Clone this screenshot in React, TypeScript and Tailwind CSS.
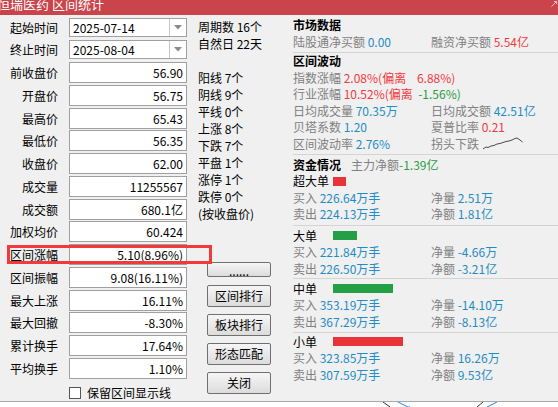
import type { ReactNode } from 'react'

const FONT = "font-['Noto_Sans_CJK_SC','Noto_Sans',sans-serif]"

const G = 'text-[#808080]'
const B = 'text-[#1f8cc4]'
const R = 'text-[#f03a40]'
const GR = 'text-[#2a9c44]'

function Combo({ label, value }: { label: string; value: string }) {
  return (
    <div className="flex h-[19px] items-center">
      <div className="w-[58px] text-right leading-[19px]">{label}</div>
      <div className="ml-[11px] flex h-[19px] w-[118px] border border-[#a0a0a0] bg-white">
        <div className="flex-1 pl-[3px] leading-[17px]">{value}</div>
        <div className="flex w-[17px] items-center justify-center border-l border-[#c8c8c8]">
          <svg width="8" height="5" viewBox="0 0 8 5">
            <path d="M0 0 H8 L4 4.5 Z" fill="#8a8a8a" />
          </svg>
        </div>
      </div>
    </div>
  )
}

function Field({ label, value, highlight }: { label: string; value: string; highlight?: boolean }) {
  return (
    <div className="relative flex h-[22.75px] items-start">
      <div className="w-[58px] text-right leading-[21px]">{label}</div>
      <div className="ml-[11px] h-[21px] w-[118px] border border-[#a0a0a0] bg-white pr-[3px] text-right leading-[19px]">
        {value}
      </div>
      {highlight ? (
        <div className="absolute left-[7px] top-[1px] h-[19px] w-[205px] border-[3px] border-[#f23a3a]" />
      ) : null}
    </div>
  )
}

function Btn({ children, className }: { children: ReactNode; className: string }) {
  return (
    <div
      className={`flex w-[64px] items-center justify-center rounded-[2px] border border-[#707070] bg-gradient-to-b from-[#f6f6f6] to-[#dcdcdc] ${className}`}
    >
      {children}
    </div>
  )
}

function Line({ left, right, className = '' }: { left: ReactNode; right?: ReactNode; className?: string }) {
  return (
    <div className={`flex h-[16.5px] whitespace-nowrap leading-[16.5px] ${className}`}>
      <div className="w-[138px]">{left}</div>
      {right ? <div>{right}</div> : null}
    </div>
  )
}

function Divider({ className = '' }: { className?: string }) {
  return <div className={`h-px bg-[#d4d4d4] ${className}`} />
}

function OrderBlock({
  name,
  bar,
  buy,
  sell,
  vol,
  amt,
}: {
  name: string
  bar: string
  buy: string
  sell: string
  vol: string
  amt: string
}) {
  return (
    <div>
      <div className="flex h-[16.5px] items-center leading-[16.5px] text-black">
        <span className="w-[40px]">{name}</span>
        <span className={`h-[9px] ${bar}`} />
      </div>
      <Line
        left={
          <>
            <span className={G}>买入 </span>
            <span className={B}>{buy}</span>
          </>
        }
        right={
          <>
            <span className={G}>净量 </span>
            <span className={B}>{vol}</span>
          </>
        }
      />
      <Line
        left={
          <>
            <span className={G}>卖出 </span>
            <span className={B}>{sell}</span>
          </>
        }
        right={
          <>
            <span className={G}>净额 </span>
            <span className={B}>{amt}</span>
          </>
        }
      />
    </div>
  )
}

export default function App() {
  const fields: [string, string][] = [
    ['前收盘价', '56.90'],
    ['开盘价', '56.75'],
    ['最高价', '65.43'],
    ['最低价', '56.35'],
    ['收盘价', '62.00'],
    ['成交量', '11255567'],
    ['成交额', '680.1亿'],
    ['加权均价', '60.424'],
    ['区间涨幅', '5.10(8.96%)'],
    ['区间振幅', '9.08(16.11%)'],
    ['最大上涨', '16.11%'],
    ['最大回撤', '-8.30%'],
    ['累计换手', '17.64%'],
    ['平均换手', '1.10%'],
  ]

  const stats = [
    '周期数 16个',
    '自然日 22天',
    '',
    '阳线 7个',
    '阴线 9个',
    '平线 0个',
    '上涨 8个',
    '下跌 7个',
    '平盘 1个',
    '涨停 1个',
    '跌停 0个',
    '(按收盘价)',
  ]

  return (
    <div className={`relative h-[407px] w-[558px] overflow-hidden bg-[#f0f0f0] text-[12px] text-black ${FONT}`}>
      {/* title bar */}
      <div className="relative h-[15px] overflow-hidden bg-[#c9444b]">
        <div className="-ml-[3px] -mt-[4px] text-[13px] leading-[15px] text-white">恒瑞医药 区间统计</div>
        <svg className="absolute right-[1px] top-[1px]" width="6" height="6" viewBox="0 0 6 6">
          <path d="M0.5 5.5 L5.5 0.5 M3 0.5 H5.5 V3" stroke="#f4c4c8" strokeWidth="1" fill="none" />
        </svg>
      </div>

      <div className="flex h-[386px]">
        {/* left fields */}
        <div className="w-[190px] shrink-0 pt-[3px]">
          <Combo label="起始时间" value="2025-07-14" />
          <div className="mt-[3px]">
            <Combo label="终止时间" value="2025-08-04" />
          </div>
          <div className="mt-[3px]">
            {fields.map(([l, v]) => (
              <Field key={l} label={l} value={v} highlight={l === '区间涨幅'} />
            ))}
          </div>
          <div className="mt-[5px] flex items-center pl-[69px]">
            <div className="h-[12px] w-[12px] border border-[#555] bg-white" />
            <span className="ml-[6px] leading-[14px]">保留区间显示线</span>
          </div>
        </div>

        {/* middle stats + buttons */}
        <div className="w-[103px] shrink-0 pt-[2.5px]">
          <div className="pl-[8px]">
            {stats.map((s, i) => (
              <div key={i} className="h-[17px] whitespace-nowrap leading-[17px]">
                {s}
              </div>
            ))}
          </div>
          <div className="ml-[17px] mt-[40.5px] flex flex-col">
            <Btn className="h-[15px] items-end overflow-hidden">
              <span className="leading-[10px]">......</span>
            </Btn>
            <Btn className="mt-[8px] h-[22px]">区间排行</Btn>
            <Btn className="mt-[7px] h-[22px]">板块排行</Btn>
            <Btn className="mt-[7px] h-[22px]">形态匹配</Btn>
            <Btn className="mt-[7px] h-[22px]">关闭</Btn>
          </div>
        </div>

        {/* right panel */}
        <div className="flex-1 pt-[2px]">
          <Line left={<span className="font-bold">市场数据</span>} />
          <Line
            left={
              <>
                <span className={G}>陆股通净买额 </span>
                <span className={B}>0.00</span>
              </>
            }
            right={
              <>
                <span className={G}>融资净买额 </span>
                <span className={R}>5.54亿</span>
              </>
            }
          />
          <Divider className="mt-[1.5px]" />
          <Line className="mt-[0.5px]" left={<span className="font-bold">区间波动</span>} />
          <Line
            left={
              <>
                <span className={G}>指数涨幅 </span>
                <span className={R}>2.08%(偏离&nbsp;&nbsp;&nbsp;&nbsp;6.88%)</span>
              </>
            }
          />
          <Line
            left={
              <>
                <span className={G}>行业涨幅 </span>
                <span className={R}>10.52%(偏离&nbsp;&nbsp;</span>
                <span className={GR}>-1.56%)</span>
              </>
            }
          />
          <Line
            left={
              <>
                <span className={G}>日均成交量 </span>
                <span className={B}>70.35万</span>
              </>
            }
            right={
              <>
                <span className={G}>日均成交额 </span>
                <span className={B}>42.51亿</span>
              </>
            }
          />
          <Line
            left={
              <>
                <span className={G}>贝塔系数 </span>
                <span className={B}>1.20</span>
              </>
            }
            right={
              <>
                <span className={G}>夏普比率 </span>
                <span className={R}>0.21</span>
              </>
            }
          />
          <Line
            left={
              <>
                <span className={G}>区间波动率 </span>
                <span className={B}>2.76%</span>
              </>
            }
            right={
              <span className="flex items-center">
                <span className={G}>拐头下跌</span>
                <svg className="ml-[4px]" width="40" height="13" viewBox="0 0 40 13">
                  <polyline
                    points="0,12 3,10 5,10.5 8,9 11,8.5 14,7 17,6.5 20,5.5 23,4.5 26,4 29,3 32,1.5 34,1 37,3 39.5,5"
                    fill="none"
                    stroke="#4a4a4a"
                    strokeWidth="1"
                  />
                </svg>
              </span>
            }
          />
          <Divider className="mt-[1.5px]" />
          <div className="mt-[1px] flex h-[17.5px] items-center whitespace-nowrap leading-[17.5px]">
            <span className="font-bold">资金情况</span>
            <span className={`ml-[10px] ${G}`}>主力净额 </span>
            <span className={GR}>-1.39亿</span>
          </div>
          <OrderBlock name="超大单" bar="w-[13px] bg-[#e83438]" buy="226.64万手" sell="224.13万手" vol="2.51万" amt="1.81亿" />
          <Divider className="mt-[2px]" />
          <div className="mt-[2px]">
            <OrderBlock name="大单" bar="w-[24px] bg-[#23a045]" buy="221.84万手" sell="226.50万手" vol="-4.66万" amt="-3.21亿" />
          </div>
          <Divider className="mt-[1px]" />
          <div className="mt-[1.5px]">
            <OrderBlock name="中单" bar="w-[60px] bg-[#23a045]" buy="353.19万手" sell="367.29万手" vol="-14.10万" amt="-8.13亿" />
          </div>
          <Divider className="mt-[1.5px]" />
          <div className="mt-[1px]">
            <OrderBlock name="小单" bar="w-[70px] bg-[#e83438]" buy="323.85万手" sell="307.59万手" vol="16.26万" amt="9.53亿" />
          </div>
        </div>
      </div>

      {/* strip of the chart window behind the dialog */}
      <div className="relative h-[6px] border-t border-[#a8a8a8] bg-white">
        <svg className="absolute left-0 top-0" width="558" height="6" viewBox="0 0 558 6">
          <path d="M383 0 L390 5" stroke="#333" strokeWidth="1" />
          <path d="M398 0 L408 5 H410" stroke="#1e88e5" strokeWidth="1" fill="none" />
          <path d="M477 5 L483 0" stroke="#333" strokeWidth="1" />
          <path d="M487 5 L497 0" stroke="#1e88e5" strokeWidth="1" />
        </svg>
      </div>
    </div>
  )
}
